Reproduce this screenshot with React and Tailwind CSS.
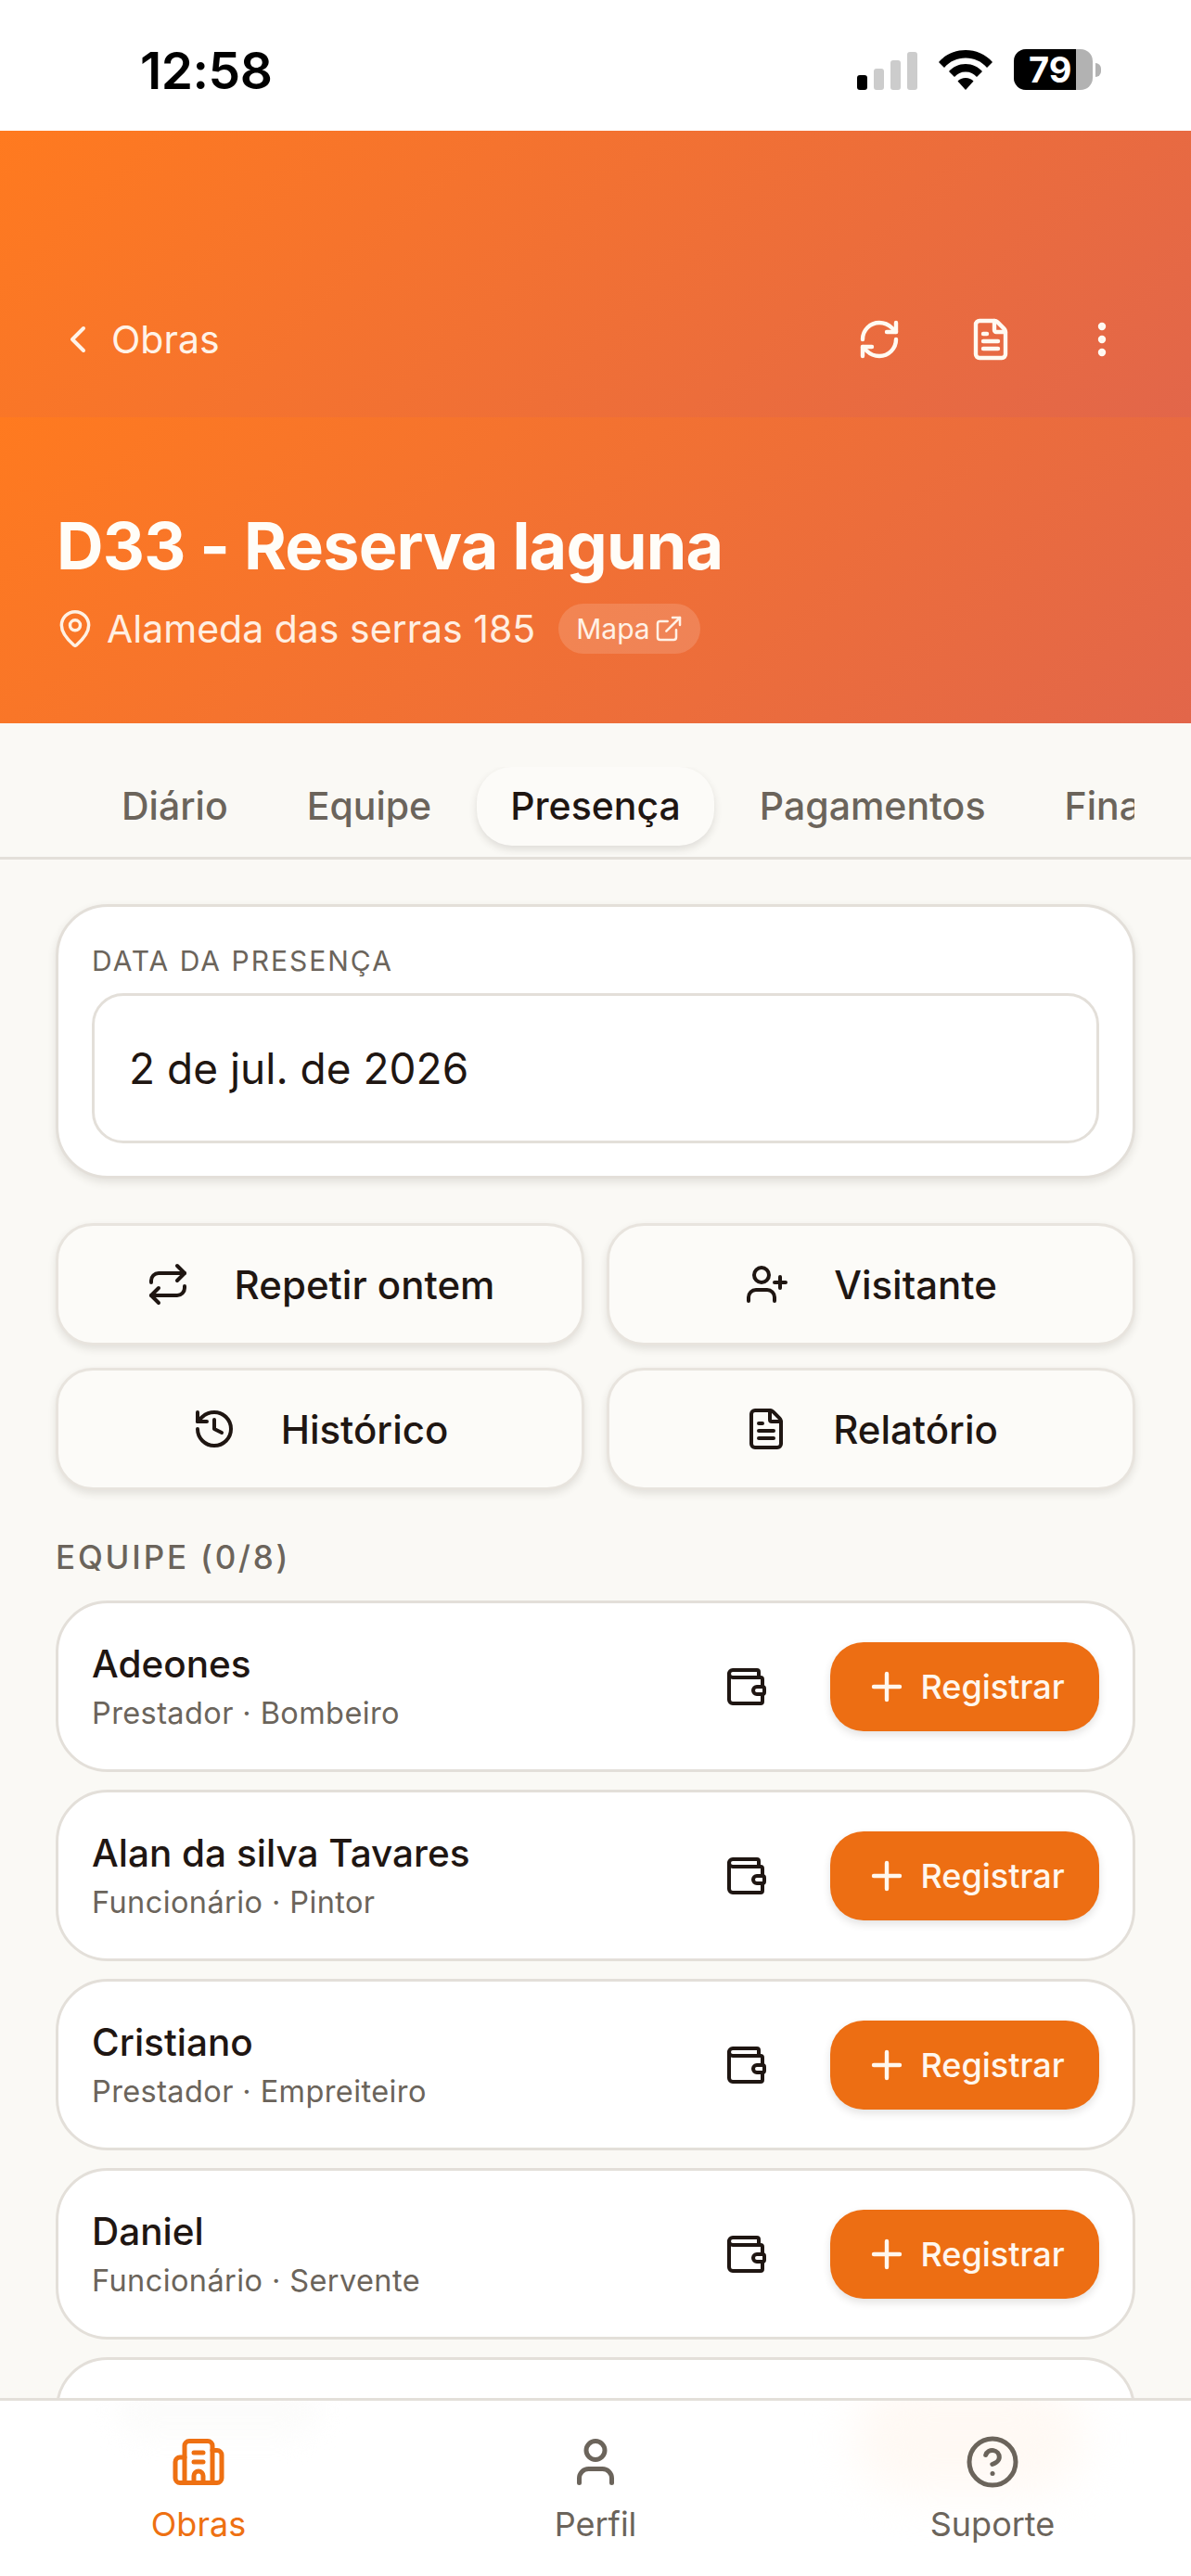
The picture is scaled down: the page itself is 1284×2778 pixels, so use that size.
import React from "react";
import { ChevronLeft, RefreshCw, FileText, EllipsisVertical, MapPin, ExternalLink, Repeat, UserPlus, History, Wallet, Plus, Building2, User, CircleHelp } from "lucide-react";

const font = { fontFamily: '"Inter", "Noto Sans", sans-serif' };

function StatusBar() {
  return (
    <div className="h-[141px] bg-white flex items-start justify-between pl-[151px] pr-[97px]">
      <span className="mt-[45px] text-[55px] leading-[62px] font-semibold text-black tracking-[-0.5px]">12:58</span>
      <div className="mt-[53px] flex items-end gap-[23px]">
        <div className="flex items-end gap-[7px] h-[43px]">
          <div className="w-[11px] h-[16px] rounded-[3px] bg-black" />
          <div className="w-[11px] h-[23px] rounded-[3px] bg-[#cccccc]" />
          <div className="w-[11px] h-[32px] rounded-[3px] bg-[#cccccc]" />
          <div className="w-[11px] h-[41px] rounded-[3px] bg-[#cccccc]" />
        </div>
        <svg width="58" height="43" viewBox="0 0 58 43" className="block">
          <path d="M29 0C18 0 8 4 0 13l6 6C12 12 20 8.500 29 8.500S46 12 52 19l6-6C50 4 40 0 29 0Z" fill="#000" />
          <path d="M29 15c-7.500 0-13.500 3-18 8l6 6c3-3.500 7-5.500 12-5.500S38 25.500 41 29l6-6c-4.500-5-10.500-8-18-8Z" fill="#000" />
          <path d="M29 30c-3.500 0-6.500 1.300-8.500 3.500L29 43l8.500-9.500C35.500 31.300 32.500 30 29 30Z" fill="#000" />
        </svg>
        <div className="flex items-center gap-[3px]">
          <div className="relative w-[85px] h-[44px] rounded-[13px] overflow-hidden bg-[#b2b2b2] flex">
            <div className="w-[67px] h-full bg-black" />
            <span className="absolute left-[16px] top-0 text-[38px] leading-[44px] font-bold text-white">79</span>
          </div>
          <div className="w-[6px] h-[15px] rounded-r-[6px] bg-[#b2b2b2]" />
        </div>
      </div>
    </div>
  );
}

function Header() {
  return (
    <div>
      <div className="h-[309px] bg-[linear-gradient(135deg,#ff7a1f,#e2664a)] flex items-end justify-between pb-[60px] pl-[60px] pr-[72px] text-[#fff3e8]">
        <div className="flex items-center gap-[12px] h-[48px]">
          <ChevronLeft size={48} strokeWidth={2} />
          <span className="text-[41px] leading-[48px]">Obras</span>
        </div>
        <div className="flex items-center gap-[72px] h-[48px] text-[#fffaf2]">
          <RefreshCw size={48} strokeWidth={2.2} />
          <FileText size={48} strokeWidth={2.2} />
          <EllipsisVertical size={48} strokeWidth={2.2} />
        </div>
      </div>
      <div className="h-[330px] bg-[linear-gradient(135deg,#ff7a1f,#e2664a)] pl-[61px] pt-[99px] text-[#fffaf2]">
        <h1 className="text-[70px] leading-[80px] font-bold tracking-[-0.8px] text-[#fffdf8]">D33 - Reserva laguna</h1>
        <div className="mt-[22px] flex items-center">
          <MapPin size={44} strokeWidth={1.9} className="-ml-[2px] text-[#fff1e4]" />
          <span className="ml-[12px] text-[41px] leading-[54px] text-[#ffefe2]">Alameda das serras 185</span>
          <span className="ml-[25px] h-[54px] pl-[19px] pr-[18px] rounded-full bg-white/15 flex items-center gap-[4px] text-[30px] text-[#fff1e6]">
            Mapa
            <ExternalLink size={32} strokeWidth={1.9} />
          </span>
        </div>
      </div>
    </div>
  );
}

function Tabs() {
  const tabs = ["Diário", "Equipe", "Presença", "Pagamentos", "Financeiro"];
  return (
    <div className="h-[147px] border-b-[3px] border-[#e3dfd9] flex items-start px-[61px]">
      <div className="mt-[47px] w-[1164px] overflow-hidden flex gap-[13px] pl-[34px] pb-[10px]">
        {tabs.map((t) =>
          t === "Presença" ? (
            <div key={t} className="shrink-0 h-[85px] px-[36px] rounded-[38px] bg-[#fcfbf8] shadow-[0_4px_8px_rgba(60,50,40,0.14)] flex items-center text-[41px] font-[450] text-[#1f1612]">
              {t}
            </div>
          ) : (
            <div key={t} className="shrink-0 h-[85px] px-[36px] flex items-center text-[41px] font-[450] text-[#6b645b]">
              {t}
            </div>
          )
        )}
      </div>
    </div>
  );
}

function DateCard() {
  return (
    <div className="h-[296px] rounded-[56px] border-[3px] border-[#e3dfd9] bg-white shadow-[0_4px_10px_rgba(60,50,40,0.12)] px-[36px] pt-[40px]">
      <div className="text-[30px] leading-[36px] font-normal tracking-[2px] text-[#6b645b]">DATA DA PRESENÇA</div>
      <div className="mt-[17px] h-[162px] rounded-[34px] border-[3px] border-[#e3dfd9] bg-white flex items-center pl-[37px] text-[46px] text-[#1f1612]">
        2 de jul. de 2026
      </div>
    </div>
  );
}

function ActionButton({ icon: Icon, label }) {
  return (
    <div className="h-[132px] rounded-[40px] border-[3px] border-[#e8e4de] bg-[#fcfbf8] shadow-[0_4px_8px_rgba(60,50,40,0.12)] flex items-center justify-center gap-[48px] text-[42px] font-[450] text-[#1f1612]">
      <Icon size={48} strokeWidth={2} />
      <span>{label}</span>
    </div>
  );
}

function Row({ name, sub }) {
  return (
    <div className="shrink-0 h-[185px] rounded-[56px] border-[3px] border-[#e3dfd9] bg-white flex items-center pl-[36px] pr-[36px]">
      <div className="flex-1">
        <div className="text-[40.500px] leading-[52px] font-[450] text-[#1f1612]">{name}</div>
        <div className="mt-[6px] text-[32.500px] leading-[42px] tracking-[0.4px] text-[#6b645b]">{sub}</div>
      </div>
      <Wallet size={48} strokeWidth={2} className="text-[#1f1612] mr-[67px]" />
      <div className="h-[96px] w-[290px] rounded-[36px] bg-[#ed6e13] shadow-[0_4px_8px_rgba(60,50,40,0.14)] flex items-center justify-center gap-[12px] text-[36px] font-[450] text-[#fff7ee]">
        <Plus size={48} strokeWidth={2.2} />
        <span>Registrar</span>
      </div>
    </div>
  );
}

function BottomNav() {
  const items = [
    { label: "Obras", Icon: Building2, color: "text-[#ee7012]" },
    { label: "Perfil", Icon: User, color: "text-[#6b645b]" },
    { label: "Suporte", Icon: CircleHelp, color: "text-[#6b645b]" },
  ];
  return (
    <div className="relative z-10 h-[192px] shrink-0 border-t-[3px] border-[#e3dfd9] bg-white grid grid-cols-3 overflow-hidden">
      <div className="absolute left-[920px] top-[-20px] w-[250px] h-[120px] rounded-full bg-[#fff9f4] blur-[24px]" />
      <div className="absolute left-[125px] top-[-20px] w-[220px] h-[60px] rounded-full bg-[#fcfcfb] blur-[14px]" />
      {items.map(({ label, Icon, color }) => (
        <div key={label} className={`relative flex flex-col items-center pt-[36px] ${color}`}>
          <Icon size={60} strokeWidth={2} />
          <span className="mt-[14px] text-[36px] leading-[46px]">{label}</span>
        </div>
      ))}
    </div>
  );
}

export default function App() {
  const rows = [
    ["Adeones", "Prestador · Bombeiro"],
    ["Alan da silva Tavares", "Funcionário · Pintor"],
    ["Cristiano", "Prestador · Empreiteiro"],
    ["Daniel", "Funcionário · Servente"],
  ];
  return (
    <div style={font} className="w-[1284px] h-[2778px] bg-[#faf9f5] flex flex-col overflow-hidden">
      <StatusBar />
      <Header />
      <Tabs />
      <main className="flex-1 min-h-0 overflow-hidden px-[60px] pt-[48px]">
        <DateCard />
        <div className="mt-[48px] grid grid-cols-2 gap-x-[24px] gap-y-[24px]">
          <ActionButton icon={Repeat} label="Repetir ontem" />
          <ActionButton icon={UserPlus} label="Visitante" />
          <ActionButton icon={History} label="Histórico" />
          <ActionButton icon={FileText} label="Relatório" />
        </div>
        <div className="mt-[52px] text-[35px] leading-[40px] font-medium tracking-[2.8px] text-[#6b645b]">EQUIPE (0/8)</div>
        <div className="mt-[27px] flex flex-col gap-[19px]">
          {rows.map(([n, s]) => (
            <Row key={n} name={n} sub={s} />
          ))}
          <div className="shrink-0 h-[185px] rounded-[56px] border-[3px] border-[#e3dfd9] bg-white" />
        </div>
      </main>
      <BottomNav />
    </div>
  );
}
